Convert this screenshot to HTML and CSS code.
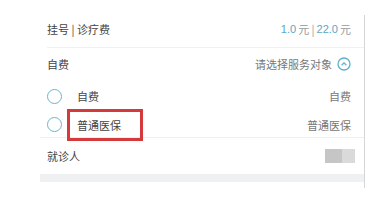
FILE: index.html
```html
<!DOCTYPE html>
<html lang="zh">
<head>
    <meta charset="UTF-8">
    <title>挂号</title>
    <link rel="stylesheet" href="styles.css">
</head>
<body>
    <div class="panel">
        <div class="row row-fee">
            <span class="label">挂号 | 诊疗费</span>
            <span class="value"><b>1.0</b> 元 | <b>22.0</b> 元</span>
        </div>
        <div class="row row-type">
            <span class="label">自费</span>
            <span class="value">请选择服务对象
                <svg class="toggle" width="14" height="14" viewBox="0 0 14 14">
                    <circle cx="7" cy="7" r="6" fill="none" stroke="#5fb0cf" stroke-width="1.3"/>
                    <path d="M4.6 8.2 L7 5.8 L9.4 8.2" fill="none" stroke="#5fb0cf" stroke-width="1.3"/>
                </svg>
            </span>
        </div>
        <div class="row row-option">
            <span class="radio"></span>
            <span class="label opt">自费</span>
            <span class="value">自费</span>
        </div>
        <div class="row row-option last">
            <span class="radio"></span>
            <span class="label opt marked">普通医保</span>
            <span class="value">普通医保</span>
        </div>
        <div class="row row-patient">
            <span class="label">就诊人</span>
            <span class="blur"></span>
        </div>
        <div class="band"></div>
    </div>
</body>
</html>
```

FILE: styles.css
```css
*{
    margin: 0;
    padding: 0;
    box-sizing: border-box;
}
body{
    background: #fff;
    font-family: "Noto Sans CJK SC", "Liberation Sans", sans-serif;
    font-size: 11px;
    color: #444;
}
.panel{
    width: 325px;
    height: 173px;
    margin: 15px 0 0 40px;
    border-right: 1px solid #d6d6d6;
}
.row{
    display: flex;
    align-items: center;
    padding: 0 13px 0 7px;
    line-height: 14px;
}
.label{
    flex: 1;
}
.value{
    color: #777;
    display: flex;
    align-items: center;
}
.row-fee{
    height: 33px;
    padding-bottom: 4px;
    border-bottom: 1px solid #f0f0f0;
    margin-left: 7px;
    padding-left: 0;
}
.row-fee .value{
    color: #999;
}
.row-fee b{
    font-weight: normal;
    color: #5aa7c6;
    font-family: "Liberation Sans", sans-serif;
    margin: 0 2px;
}
.row-type{
    height: 32px;
}
.toggle{
    margin-left: 5px;
}
.row-option{
    height: 32px;
    padding-left: 7px;
}
.row-option.last{
    height: 26px;
    border-bottom: 1px solid #f0f0f0;
}
.radio{
    width: 15px;
    height: 15px;
    border: 1.5px solid #6eb3cb;
    border-radius: 50%;
    margin-right: 15px;
}
.opt{
    position: relative;
}
.marked::after{
    content: "";
    box-sizing: border-box;
    position: absolute;
    left: -10px;
    top: -9px;
    width: 76px;
    height: 32px;
    border: 3px solid #d4393b;
}
.row-patient{
    height: 36px;
}
.blur{
    width: 30px;
    height: 14px;
    background: linear-gradient(to right, #c6c6c6 55%, #dadada 55%);
    margin-right: -4px;
}
.band{
    height: 8px;
    background: #eef0f2;
}
```
